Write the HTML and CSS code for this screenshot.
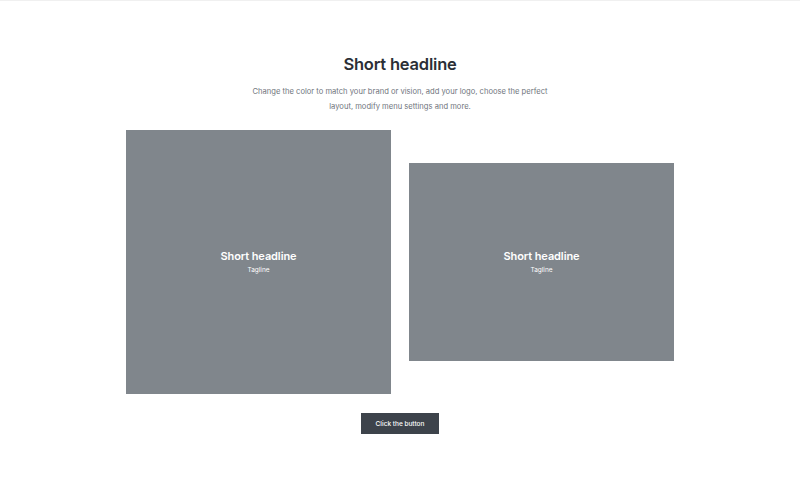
FILE: index.html
```html
<!DOCTYPE html>
<html lang="en">
<head>
  <meta charset="UTF-8" />
  <meta name="viewport" content="width=device-width, initial-scale=1.0"/>
  <title>Short headline</title>
  <link rel="stylesheet" href="styles.css">
</head>
<body>

  <section class="feature">
    <h1>Short headline</h1>
    <p class="intro">Change the color to match your brand or vision, add your logo, choose the perfect layout, modify menu settings and more.</p>

    <div class="cards">
      <div class="card card-tall">
        <h2>Short headline</h2>
        <span>Tagline</span>
      </div>
      <div class="card card-wide">
        <h2>Short headline</h2>
        <span>Tagline</span>
      </div>
    </div>

    <a href="#" class="btn">Click the button</a>
  </section>

</body>
</html>
```

FILE: styles.css
```css
body {
  margin: 0;
  font-family: Inter, "Noto Sans", Arial, sans-serif;
  background: #fff;
  border-top: 1px solid #f0f0f0;
}

.feature {
  display: flex;
  flex-direction: column;
  align-items: center;
  padding-top: 52px;
}

h1 {
  margin: 0;
  font-size: 16.5px;
  font-weight: 600;
  color: #2b2f36;
  letter-spacing: -0.2px;
  line-height: 22px;
}

.intro {
  margin: 9px 0 0;
  width: 304px;
  text-align: center;
  font-size: 7.6px;
  line-height: 15px;
  color: #70757d;
}

.cards {
  margin-top: 16px;
  display: flex;
  align-items: center;
  gap: 18px;
}

.card {
  width: 265px;
  background: #80868c;
  color: #fff;
  display: flex;
  flex-direction: column;
  align-items: center;
  justify-content: center;
  gap: 3px;
}

.card-tall {
  height: 264px;
}

.card-wide {
  height: 198px;
}

.card h2 {
  margin: 0;
  font-size: 11px;
  font-weight: 600;
  line-height: 14px;
  letter-spacing: -0.1px;
}

.card span {
  font-size: 6.5px;
  line-height: 9px;
}

.btn {
  margin-top: 19px;
  width: 78px;
  height: 21px;
  display: flex;
  align-items: center;
  justify-content: center;
  background: #3d434b;
  color: #fff;
  font-size: 6.5px;
  font-weight: 500;
  text-decoration: none;
}
```
